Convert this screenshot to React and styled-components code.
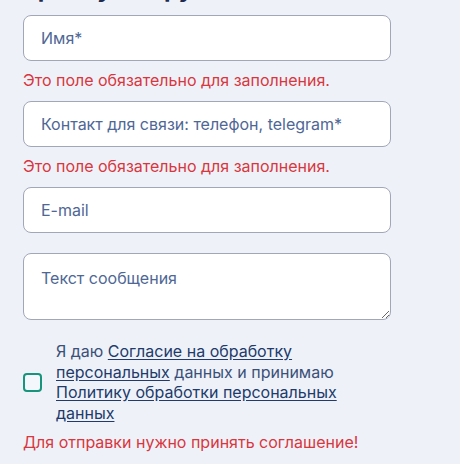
import React from "react";
import styled, { createGlobalStyle } from "styled-components";

const Global = createGlobalStyle`
  html, body { margin: 0; padding: 0; background: #eef2f8; }
  body { font-family: Inter, "Noto Sans", sans-serif; overflow: hidden; }
  * { box-sizing: border-box; }
`;

const Page = styled.div`
  width: 460px;
  height: 464px;
  overflow: hidden;
  padding: 0 70px 0 23px;
`;

const Heading = styled.h2`
  margin: -56px 0 11px;
  font-size: 24px;
  line-height: 30px;
  font-weight: 700;
  color: #1d2b4f;
`;

const Form = styled.form`
  display: flex;
  flex-direction: column;
`;

const Field = styled.div`
  display: flex;
  flex-direction: column;
  margin-bottom: 20px;
`;

const Input = styled.input`
  width: 368px;
  height: 46px;
  border: 1px solid #a2a7b8;
  border-radius: 8px;
  background: #fff;
  padding: 0 17px;
  font-family: inherit;
  font-size: 16px;
  color: #2c4470;
  outline: none;
  &::placeholder { color: #4e6795; opacity: 1; }
`;

const TextArea = styled.textarea`
  width: 368px;
  height: 67px;
  border: 1px solid #a2a7b8;
  border-radius: 8px;
  background: #fff;
  padding: 14px 17px 8px;
  font-family: inherit;
  font-size: 16px;
  line-height: 20px;
  color: #2c4470;
  outline: none;
  resize: vertical;
  display: block;
  &::placeholder { color: #4e6795; opacity: 1; }
`;

const Error = styled.div`
  color: #d9363e;
  font-size: 16px;
  line-height: 20px;
  margin-top: ${(p) => p.$top || 9}px;
  margin-bottom: ${(p) => p.$bottom || -9}px;
`;

const Consent = styled.label`
  display: flex;
  align-items: center;
  gap: 14px;
  margin-top: 1px;
`;

const Box = styled.span`
  flex: none;
  width: 19px;
  height: 19px;
  border: 2.5px solid #16957c;
  border-radius: 4px;
  background: #f4f7fb;
`;

const ConsentText = styled.span`
  font-size: 16px;
  line-height: 20.5px;
  color: #3a5079;
  width: 292px;
`;

const Link = styled.a`
  color: #213a6b;
  text-decoration: underline;
  text-underline-offset: 2px;
`;

export default function App() {
  return (
    <Page>
      <Global />
      <Heading>
        Записаться на
        <br />
        пробную игру
      </Heading>
      <Form>
        <Field>
          <Input placeholder="Имя*" />
          <Error>Это поле обязательно для заполнения.</Error>
        </Field>
        <Field>
          <Input placeholder="Контакт для связи: телефон, telegram*" />
          <Error>Это поле обязательно для заполнения.</Error>
        </Field>
        <Field>
          <Input placeholder="E-mail" />
        </Field>
        <Field>
          <TextArea placeholder="Текст сообщения" />
        </Field>
        <Consent>
          <Box />
          <ConsentText>
            Я даю <Link href="#">Согласие на обработку персональных</Link> данных и
            принимаю <Link href="#">Политику обработки персональных данных</Link>
          </ConsentText>
        </Consent>
        <Error $top={9}>Для отправки нужно принять соглашение!</Error>
      </Form>
    </Page>
  );
}
